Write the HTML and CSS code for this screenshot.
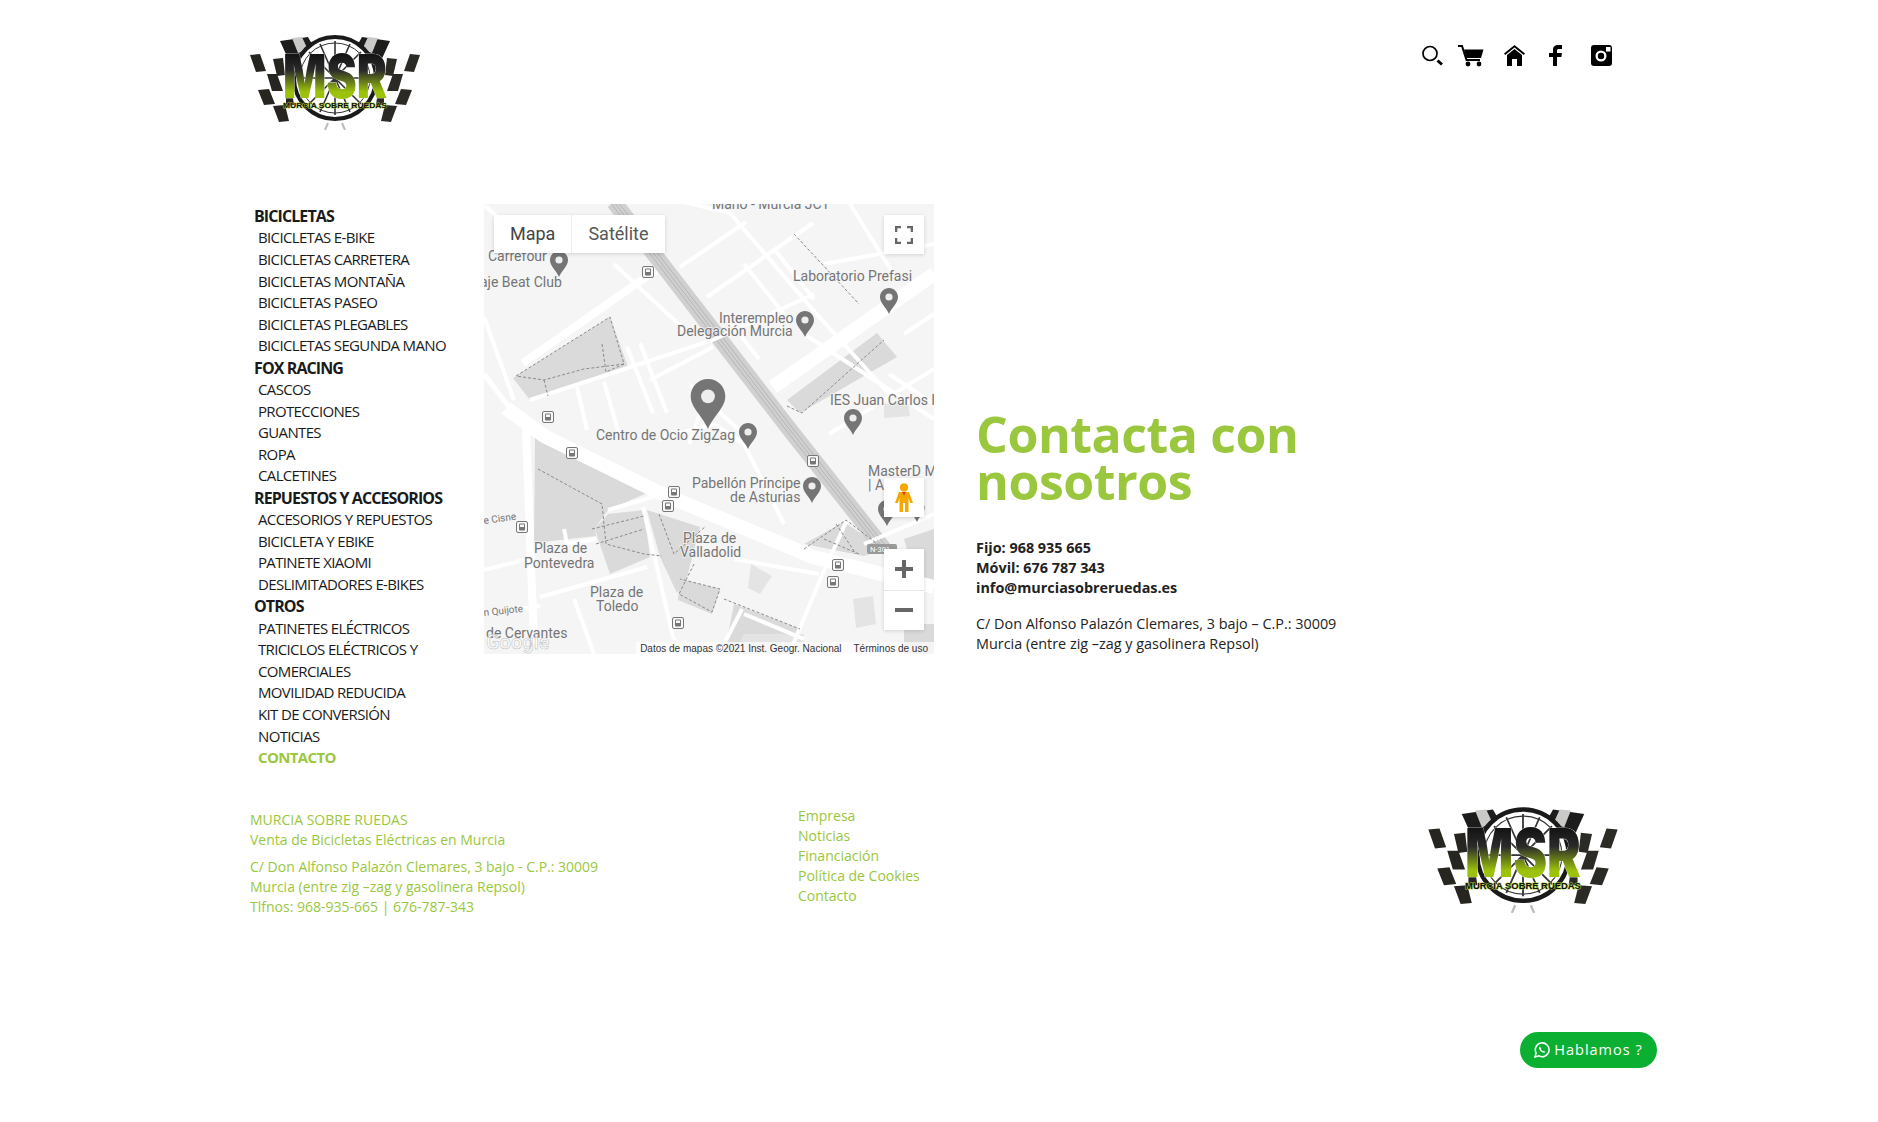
FILE: index.html
```html
<!DOCTYPE html>
<html lang="es">
<head>
    <meta charset="UTF-8">
    <meta name="viewport" content="width=device-width, initial-scale=1.0">
    <title>Contacto - Murcia Sobre Ruedas</title>
    <link rel="stylesheet" href="styles.css">
</head>
<body>

<!-- shared drawings: logo and map markers -->
<svg class="defs" aria-hidden="true">
  <defs>
    <linearGradient id="msr-fill" x1="0" y1="0" x2="0" y2="1">
      <stop offset="0.2" stop-color="#141414"/>
      <stop offset="0.42" stop-color="#2a2a2a"/>
      <stop offset="0.72" stop-color="#9cc20c"/>
    </linearGradient>
    <symbol id="logo" viewBox="0 0 170 97">
      <!-- top flags -->
      <path d="M30 8 L58 4 L66 18 L40 30 Z" fill="#1c1c1c"/>
      <path d="M42 5 L52 4 L58 17 L48 20 Z" fill="#c9c9c7"/>
      <path d="M140 8 L112 4 L104 18 L130 30 Z" fill="#1c1c1c"/>
      <path d="M128 5 L118 4 L112 17 L122 20 Z" fill="#c9c9c7"/>
      <!-- checks, left -->
      <path d="M0 22 L10 21 L16 38 L6 39 Z M23 26 L33 25 L35 42 L27 43 Z M17 41 L27 41 L33 58 L22 58 Z M8 57 L19 56 L25 71 L14 72 Z M36 58 L42 58 L44 72 L36 72 Z M23 73 L35 72 L39 88 L29 89 Z" fill="#26251f"/>
      <!-- checks, right -->
      <path d="M170 22 L160 21 L154 38 L164 39 Z M147 26 L137 25 L135 42 L143 43 Z M153 41 L143 41 L137 58 L148 58 Z M162 57 L151 56 L145 71 L156 72 Z M134 58 L128 58 L126 72 L134 72 Z M147 73 L135 72 L131 88 L141 89 Z" fill="#2b2a24"/>
      <!-- wheel -->
      <circle cx="85" cy="45" r="41" fill="#fff" stroke="#1a1a1a" stroke-width="4"/>
      <circle cx="85" cy="45" r="35" fill="none" stroke="#333" stroke-width="1"/>
      <path d="M85 8 V82 M48 45 H122 M59 19 L111 71 M111 19 L59 71 M70 11 L100 79 M100 11 L70 79" stroke="#333" stroke-width="1.6"/>
      <path d="M78 90 L75 97 M92 90 L95 97" stroke="#bbb" stroke-width="2"/>
      <!-- lettering -->
      <text class="logo-msr" x="33" y="65" textLength="104" lengthAdjust="spacingAndGlyphs">MSR</text>
      <text class="logo-name" x="33" y="75" textLength="104" lengthAdjust="spacingAndGlyphs">MURCIA SOBRE RUEDAS</text>
    </symbol>
    <symbol id="bus" viewBox="0 0 12 12">
      <rect x="0.5" y="0.5" width="11" height="11" rx="1.5" fill="#f8f8f8" stroke="#777"/>
      <rect x="3" y="2.5" width="6" height="7" rx="1" fill="#777"/>
      <rect x="4" y="3.5" width="4" height="2.5" fill="#f8f8f8"/>
    </symbol>
    <symbol id="pin" viewBox="0 0 18 26">
      <path d="M9 0 C4 0 0 4 0 9 C0 15 6 19 9 26 C12 19 18 15 18 9 C18 4 14 0 9 0 Z" fill="#757575"/>
      <circle cx="9" cy="9" r="3.6" fill="#eee"/>
    </symbol>
  </defs>
</svg>

<div class="page">

  <header class="top">
    <a class="logo-link" href="#"><svg class="logo"><use href="#logo"/></svg></a>
    <nav class="top-icons">
      <a class="ico ico-search" href="#">
        <svg width="21" height="21" viewBox="0 0 21 21"><circle cx="8" cy="8.5" r="7" fill="none" stroke="#000" stroke-width="1.7"/><path d="M15.500 15.500 L20 19.500" stroke="#000" stroke-width="3"/></svg>
      </a>
      <a class="ico ico-cart" href="#">
        <svg width="26" height="22" viewBox="0 0 26 22"><path d="M0 1 H4 L8.500 15 H22" fill="none" stroke="#000" stroke-width="2"/><path d="M6 4.500 H25.500 L23 13 H8.500 Z" fill="#000"/><circle cx="10" cy="19" r="2.400" fill="#000"/><circle cx="21" cy="19" r="2.400" fill="#000"/></svg>
      </a>
      <a class="ico ico-home" href="#">
        <svg width="21" height="21" viewBox="0 0 21 21"><path d="M10.500 0 L21 8.500 L19.800 10 L10.500 2.600 L1.200 10 L0 8.500 Z" fill="#000"/><path d="M10.500 4 L18 10 V21 H13 V14 H8 V21 H3 V10 Z" fill="#000"/></svg>
      </a>
      <a class="ico ico-fb" href="#">
        <svg width="13" height="21" viewBox="0 0 13 21"><path d="M4 21 V12 H0 V8 H4 V5 C4 1.500 6 0 9 0 H13 V4 H10 C8.600 4 8 4.600 8 6 V8 H13 L12.300 12 H8 V21 Z" fill="#000"/></svg>
      </a>
      <a class="ico ico-ig" href="#">
        <svg width="21" height="21" viewBox="0 0 21 21"><path fill-rule="evenodd" d="M3 0 H18 A3 3 0 0 1 21 3 V18 A3 3 0 0 1 18 21 H3 A3 3 0 0 1 0 18 V3 A3 3 0 0 1 3 0 Z M15 2 V6.500 H19.500 V2 Z M10 5.500 A5.500 5.500 0 1 0 10 16.500 A5.500 5.500 0 1 0 10 5.500 Z M10 7.800 A3.200 3.200 0 1 1 10 14.200 A3.200 3.200 0 1 1 10 7.800 Z"/></svg>
      </a>
    </nav>
  </header>

  <main class="content">

    <nav class="side-menu">
      <a class="head" href="#">BICICLETAS</a>
      <a href="#">BICICLETAS E-BIKE</a>
      <a href="#">BICICLETAS CARRETERA</a>
      <a href="#">BICICLETAS MONTAÑA</a>
      <a href="#">BICICLETAS PASEO</a>
      <a href="#">BICICLETAS PLEGABLES</a>
      <a href="#">BICICLETAS SEGUNDA MANO</a>
      <a class="head" href="#">FOX RACING</a>
      <a href="#">CASCOS</a>
      <a href="#">PROTECCIONES</a>
      <a href="#">GUANTES</a>
      <a href="#">ROPA</a>
      <a href="#">CALCETINES</a>
      <a class="head" href="#">REPUESTOS Y ACCESORIOS</a>
      <a href="#">ACCESORIOS Y REPUESTOS</a>
      <a href="#">BICICLETA Y EBIKE</a>
      <a href="#">PATINETE XIAOMI</a>
      <a href="#">DESLIMITADORES E-BIKES</a>
      <a class="head" href="#">OTROS</a>
      <a href="#">PATINETES ELÉCTRICOS</a>
      <a href="#">TRICICLOS ELÉCTRICOS Y COMERCIALES</a>
      <a href="#">MOVILIDAD REDUCIDA</a>
      <a href="#">KIT DE CONVERSIÓN</a>
      <a href="#">NOTICIAS</a>
      <a class="current" href="#">CONTACTO</a>
    </nav>

    <div class="map">
      <svg class="map-base" viewBox="0 0 450 450" width="450" height="450">
        <rect width="450" height="450" fill="#f5f5f5"/>

        <!-- parks -->
        <g fill="#dadada">
          <path d="M29 174 L126 113 L144 163 L46 196 Z"/>
          <path d="M303 196 L393 129 L413 153 L316 209 Z"/>
          <path d="M51 229 L163 289 L124 306 L111 324 L112 332 L50 339 Z"/>
          <path d="M111 324 L124 310 L160 306 L166 353 L126 370 L113 332 Z"/>
          <path d="M163 306 L216 323 L203 373 L193 389 L176 353 Z"/>
          <path d="M196 375 L236 385 L228 410 L194 396 Z"/>
          <path d="M250 400 L316 425 L310 450 L240 450 Z"/>
          <path d="M320 340 L360 318 L400 345 L380 352 L345 345 Z"/>
          <path d="M420 335 L450 325 L450 380 L430 370 Z"/>
          <path d="M420 420 L450 420 L450 450 L420 450 Z"/>
        </g>
        <g fill="#e4e4e4">
          <path d="M267 360 L288 372 L276 390 L264 384 Z"/>
          <path d="M369 395 L389 392 L392 420 L372 424 Z"/>
          <path d="M400 200 L424 198 L426 212 L400 214 Z"/>
          <path d="M260 430 L320 430 L320 450 L250 450 Z"/>
        </g>

        <!-- rail band -->
        <path d="M130 -2 L306 226 L400 345" stroke="#d0d0d0" stroke-width="16" fill="none"/>
        <path d="M130 -2 L306 226 L400 345 M126 -2 L302 226 L396 345 M134 -2 L310 226 L404 345" stroke="#a9a9a9" stroke-width="0.7" fill="none"/>

        <!-- small streets -->
        <g stroke="#fff" stroke-width="4" fill="none">
          <path d="M1 2 L26 24"/>
          <path d="M223 93 L329 19"/>
          <path d="M196 63 L262 18"/>
          <path d="M246 9 L329 106 L405 190"/>
          <path d="M200 -2 L246 9"/>
          <path d="M366 0 L412 74"/>
          <path d="M0 113 L30 196"/>
          <path d="M46 196 L229 136 L330 90"/>
          <path d="M166 176 L229 143"/>
          <path d="M143 143 L169 209"/>
          <path d="M156 139 L183 209"/>
          <path d="M93 183 L103 226"/>
          <path d="M120 178 L135 230"/>
          <path d="M0 366 L40 356"/>
          <path d="M56 393 L163 363"/>
          <path d="M159 303 L189 433 L200 450"/>
          <path d="M124 306 L169 293"/>
          <path d="M80 325 L83 340 L112 335"/>
          <path d="M363 316 L339 369 L305 450"/>
          <path d="M250 355 L335 370"/>
          <path d="M175 235 L230 220 L260 240 L300 320"/>
          <path d="M205 180 L255 226"/>
          <path d="M320 130 L450 215"/>
          <path d="M340 60 L450 40"/>
          <path d="M345 230 L450 165"/>
          <path d="M405 170 L450 200"/>
          <path d="M380 340 L450 310"/>
          <path d="M420 130 L450 110"/>
          <path d="M0 410 L56 402"/>
          <path d="M90 395 L110 450"/>
          <path d="M260 410 L320 435"/>
          <path d="M235 450 L258 405"/>
          <path d="M260 60 L300 110 M290 45 L330 95 M240 110 L275 155"/>
          <path d="M220 200 L205 240 M130 60 L200 125"/>
        </g>

        <!-- main avenues -->
        <g stroke="#fff" stroke-width="14" fill="none" stroke-linecap="butt">
          <path d="M22 204 L60 232 L176 289 L329 353 L450 383"/>
          <path d="M289 183 L450 70"/>
        </g>
        <path d="M39 159 L172 66" stroke="#fff" stroke-width="8" fill="none"/>
        <path d="M42 226 L50 440" stroke="#fff" stroke-width="8" fill="none"/>
        <path d="M0 170 L42 226" stroke="#fff" stroke-width="5" fill="none"/>

        <!-- park paths -->
        <g stroke="#8a8a8a" stroke-width="1" stroke-dasharray="3 2" fill="none">
          <path d="M32 172 L126 113 L140 160 L100 165 L60 176 L32 172"/>
          <path d="M60 176 L64 192 M118 140 L122 168 L140 160"/>
          <path d="M303 202 L318 209 L400 136"/>
          <path d="M310 30 L375 100"/>
          <path d="M54 265 L118 300 L122 340 L160 350 L178 352 M112 340 L160 325 M108 325 L160 312"/>
          <path d="M175 310 L190 350 L222 322 M210 360 L195 390 L228 408 L236 385 L196 375"/>
          <path d="M240 395 L316 425"/>
          <path d="M320 345 L362 316 L400 345 M340 335 L375 350 M352 320 L372 350"/>
        </g>

        <!-- gray tags -->
        <rect x="383" y="340" width="30" height="10" rx="2" fill="#9a9a9a"/>
        <text class="m-tag" x="386" y="348">N-301</text>

        <!-- labels -->
        <g class="m-label">
          <text x="228" y="5">Mano - Murcia JCT</text>
          <text x="4" y="57">Carrefour</text>
          <text x="-4" y="83">aje Beat Club</text>
          <text x="309" y="77">Laboratorio Prefasi</text>
          <text x="235" y="119">Interempleo</text>
          <text x="193" y="132">Delegación Murcia</text>
          <text x="346" y="201">IES Juan Carlos I</text>
          <text x="112" y="236">Centro de Ocio ZigZag</text>
          <text x="208" y="284">Pabellón Príncipe</text>
          <text x="246" y="298">de Asturias</text>
          <text x="384" y="272">MasterD M</text>
          <text x="384" y="286">| A</text>
          <text x="199" y="339">Plaza de</text>
          <text x="196" y="353">Valladolid</text>
          <text x="50" y="349">Plaza de</text>
          <text x="40" y="364">Pontevedra</text>
          <text x="106" y="393">Plaza de</text>
          <text x="112" y="407">Toledo</text>
          <text x="2" y="434">de Cervantes</text>
        </g>
        <g class="m-label m-small">
          <text x="0" y="320" transform="rotate(-8 0 320)">e Cisne</text>
          <text x="0" y="412" transform="rotate(-6 0 412)">n Quijote</text>
        </g>
        <text class="m-google" x="2" y="445">Google</text>

        <!-- bus stops -->
        <g>
          <use href="#bus" x="158" y="62" width="12" height="12"/>
          <use href="#bus" x="58" y="207" width="12" height="12"/>
          <use href="#bus" x="82" y="243" width="12" height="12"/>
          <use href="#bus" x="184" y="282" width="12" height="12"/>
          <use href="#bus" x="178" y="296" width="12" height="12"/>
          <use href="#bus" x="32" y="317" width="12" height="12"/>
          <use href="#bus" x="323" y="251" width="12" height="12"/>
          <use href="#bus" x="348" y="355" width="12" height="12"/>
          <use href="#bus" x="343" y="372" width="12" height="12"/>
          <use href="#bus" x="188" y="413" width="12" height="12"/>
        </g>

        <!-- markers -->
        <use href="#pin" x="66" y="47" width="18" height="26"/>
        <use href="#pin" x="396" y="84" width="18" height="26"/>
        <use href="#pin" x="312" y="107" width="18" height="26"/>
        <use href="#pin" x="360" y="205" width="18" height="26"/>
        <use href="#pin" x="255" y="219" width="18" height="26"/>
        <use href="#pin" x="319" y="273" width="18" height="26"/>
        <use href="#pin" x="394" y="296" width="18" height="26"/>
        <use href="#pin" x="424" y="296" width="18" height="22"/>
        <use href="#pin" x="203" y="175" width="42" height="50"/>
      </svg>

      <div class="map-type">
        <span class="map-type-btn is-on">Mapa</span>
        <span class="map-type-btn">Satélite</span>
      </div>
      <div class="map-btn map-full">
        <svg width="18" height="18" viewBox="0 0 18 18"><path d="M1 6 V1 H6 M12 1 H17 V6 M17 12 V17 H12 M6 17 H1 V12" fill="none" stroke="#666" stroke-width="2.600"/></svg>
      </div>
      <div class="map-btn map-peg">
        <svg width="18" height="30" viewBox="0 0 18 30"><circle cx="9" cy="4.500" r="4.200" fill="#f6a800"/><path d="M4 9 H14 L18 20 H15 L13.500 15 V29 H10 V20 H8 V29 H4.500 V15 L3 20 H0 Z" fill="#f6a800"/><path d="M7 9 L9 13 L11 9 Z" fill="#d8481e"/></svg>
      </div>
      <div class="map-zoom">
        <button class="zoom-btn" type="button"><svg width="18" height="18" viewBox="0 0 18 18"><path d="M0 9 H18 M9 0 V18" stroke="#666" stroke-width="4"/></svg></button>
        <button class="zoom-btn" type="button"><svg width="18" height="18" viewBox="0 0 18 18"><path d="M0 9 H18" stroke="#666" stroke-width="4"/></svg></button>
      </div>
      <div class="map-foot">
        <span>Datos de mapas ©2021 Inst. Geogr. Nacional</span>
        <span>Términos de uso</span>
      </div>
    </div>

    <section class="contact">
      <h1>Contacta con nosotros</h1>
      <p class="contact-strong">
        Fijo: 968 935 665<br>
        Móvil: 676 787 343<br>
        info@murciasobreruedas.es
      </p>
      <p>
        C/ Don Alfonso Palazón Clemares, 3 bajo – C.P.: 30009<br>
        Murcia (entre zig –zag y gasolinera Repsol)
      </p>
    </section>

  </main>

  <footer class="foot">
    <div class="foot-address">
      <p>MURCIA SOBRE RUEDAS<br>Venta de Bicicletas Eléctricas en Murcia</p>
      <p>C/ Don Alfonso Palazón Clemares, 3 bajo - C.P.: 30009<br>
      Murcia (entre zig –zag y gasolinera Repsol)<br>
      Tlfnos: 968-935-665 | 676-787-343</p>
    </div>
    <nav class="foot-links">
      <a href="#">Empresa</a>
      <a href="#">Noticias</a>
      <a href="#">Financiación</a>
      <a href="#">Política de Cookies</a>
      <a href="#">Contacto</a>
    </nav>
    <svg class="foot-logo"><use href="#logo"/></svg>
  </footer>

</div>

<a class="whatsapp" href="#">
  <svg width="16" height="16" viewBox="0 0 16 16"><path d="M1 15 L2.100 11 A6.900 6.900 0 1 1 5 13.900 Z" fill="none" stroke="#fff" stroke-width="1.500"/><path d="M5.500 4.500 C4.500 5.500 5 7.500 6.500 9 C8 10.500 10 11.300 11.300 10.300 L10 8.800 L9 9.300 C8 8.800 7.200 8 6.800 7 L7.300 6 Z" fill="#fff"/></svg>
  Hablamos ?
</a>

</body>
</html>
```

FILE: styles.css
```css
:root {
    --green: #9ac73d;
    --text: #1c1c1c;
}

html, body {
    margin: 0;
    padding: 0;
    background: #fff;
}

body {
    font-family: "Open Sans", sans-serif;
    font-size: 14.4px;
    color: var(--text);
    min-height: 1122px;
    overflow: hidden;
}

a {
    color: inherit;
    text-decoration: none;
}

p {
    margin: 0;
}

.defs {
    display: block;
    width: 0;
    height: 0;
}

.page {
    margin-left: 250px;
    width: 1370px;
}

/* header */

.top {
    display: flex;
    justify-content: space-between;
    align-items: flex-start;
    height: 204px;
    box-sizing: border-box;
    padding-top: 33px;
}

.logo {
    display: block;
    width: 170px;
    height: 97px;
}

.logo-msr {
    font-family: "Inter", "Liberation Sans", sans-serif;
    font-weight: 900;
    font-size: 60px;
    fill: url(#msr-fill);
    stroke: #fff;
    stroke-width: 0.6px;
    paint-order: stroke;
}

.logo-name {
    font-family: "Liberation Sans", sans-serif;
    font-weight: 700;
    font-size: 8px;
    fill: #111;
    stroke: #b5d33a;
    stroke-width: 0.8px;
    paint-order: stroke;
}

.top-icons {
    display: flex;
    align-items: center;
    margin-top: 12px;
    margin-right: 8px;
}

.ico {
    display: block;
    height: 22px;
}

.ico svg {
    display: block;
}

.ico-cart { margin-left: 15px; }
.ico-home { margin-left: 20px; }
.ico-fb { margin-left: 24px; }
.ico-ig { margin-left: 29px; }

/* content row */

.content {
    display: flex;
    align-items: flex-start;
}

.side-menu {
    width: 234px;
    flex: none;
    padding-top: 1px;
    font-size: 15px;
    line-height: 21.55px;
    letter-spacing: -0.65px;
    color: #1a1a1a;
}

.side-menu a {
    display: block;
    padding-left: 8px;
    padding-right: 20px;
}

.side-menu .head {
    padding-left: 4px;
    padding-right: 0;
    font-size: 16px;
    font-weight: 700;
    letter-spacing: -0.9px;
    line-height: 22.4px;
}

.side-menu .current {
    color: var(--green);
    font-weight: 700;
}

/* map */

.map {
    position: relative;
    width: 450px;
    height: 450px;
    flex: none;
    overflow: hidden;
    font-family: "Roboto", sans-serif;
}

.map-base {
    display: block;
}

.m-label text {
    font-family: "Roboto", sans-serif;
    font-size: 14px;
    fill: #757575;
    stroke: #f5f5f5;
    stroke-width: 1.5px;
    paint-order: stroke;
}

.m-label.m-small text {
    font-size: 10px;
}

.m-tag {
    font-family: "Roboto", sans-serif;
    font-size: 7.5px;
    fill: #fff;
}

.m-google {
    font-family: "Roboto", sans-serif;
    font-size: 20px;
    font-weight: 500;
    fill: #fff;
    fill-opacity: 0.7;
    stroke: #bbb;
    stroke-width: 0.5px;
}

.map-type {
    position: absolute;
    left: 10px;
    top: 11px;
    height: 38px;
    display: flex;
    background: #fff;
    box-shadow: 0 1px 4px rgba(0, 0, 0, 0.15);
}

.map-type-btn {
    display: flex;
    align-items: center;
    padding: 0 16px 2px;
    font-size: 18px;
    color: #565656;
}

.map-type-btn.is-on {
    color: #444;
    border-right: 1px solid #eee;
}

.map-btn {
    position: absolute;
    left: 400px;
    width: 40px;
    height: 39px;
    background: #fff;
    box-shadow: 0 1px 4px rgba(0, 0, 0, 0.15);
    display: flex;
    align-items: center;
    justify-content: center;
}

.map-full {
    top: 11px;
}

.map-peg {
    top: 274px;
}

.map-zoom {
    position: absolute;
    left: 400px;
    top: 345px;
    width: 40px;
    height: 81px;
    background: #fff;
    box-shadow: 0 1px 4px rgba(0, 0, 0, 0.15);
}

.zoom-btn {
    display: flex;
    align-items: center;
    justify-content: center;
    width: 40px;
    height: 40.5px;
    padding: 0;
    border: 0;
    background: none;
}

.zoom-btn + .zoom-btn {
    border-top: 1px solid #e6e6e6;
}

.map-foot {
    position: absolute;
    right: 0;
    bottom: 0;
    height: 12px;
    padding: 0 6px 0 4px;
    display: flex;
    gap: 12px;
    align-items: center;
    background: rgba(255, 255, 255, 0.7);
    font-family: "Liberation Sans", sans-serif;
    font-size: 10px;
    color: #333;
}

/* contact */

.contact {
    margin-left: 42px;
    padding-top: 207px;
}

.contact h1 {
    margin: 0 0 33px;
    width: 340px;
    font-size: 50px;
    font-weight: 700;
    line-height: 47px;
    letter-spacing: -0.45px;
    color: var(--green);
}

.contact p {
    line-height: 20px;
    margin-bottom: 16px;
    color: #222;
}

.contact-strong {
    font-weight: 700;
}

/* footer */

.foot {
    display: flex;
    align-items: flex-start;
    padding-top: 37px;
    font-size: 14px;
    color: var(--green);
    line-height: 20px;
}

.foot-address {
    width: 548px;
    padding-top: 4px;
}

.foot-address p {
    margin-bottom: 7px;
}

.foot-links {
    display: flex;
    flex-direction: column;
    width: 630px;
}

.foot-logo {
    display: block;
    width: 190px;
    height: 108px;
    margin-top: -1px;
}

/* floating whatsapp button */

.whatsapp {
    position: fixed;
    left: 1520px;
    top: 1032px;
    height: 36px;
    width: 137px;
    box-sizing: border-box;
    padding-bottom: 1px;
    border-radius: 18px;
    background: #0bb033;
    color: #fff;
    display: flex;
    align-items: center;
    justify-content: center;
    gap: 4px;
    font-size: 14.5px;
    letter-spacing: 1px;
}
```
